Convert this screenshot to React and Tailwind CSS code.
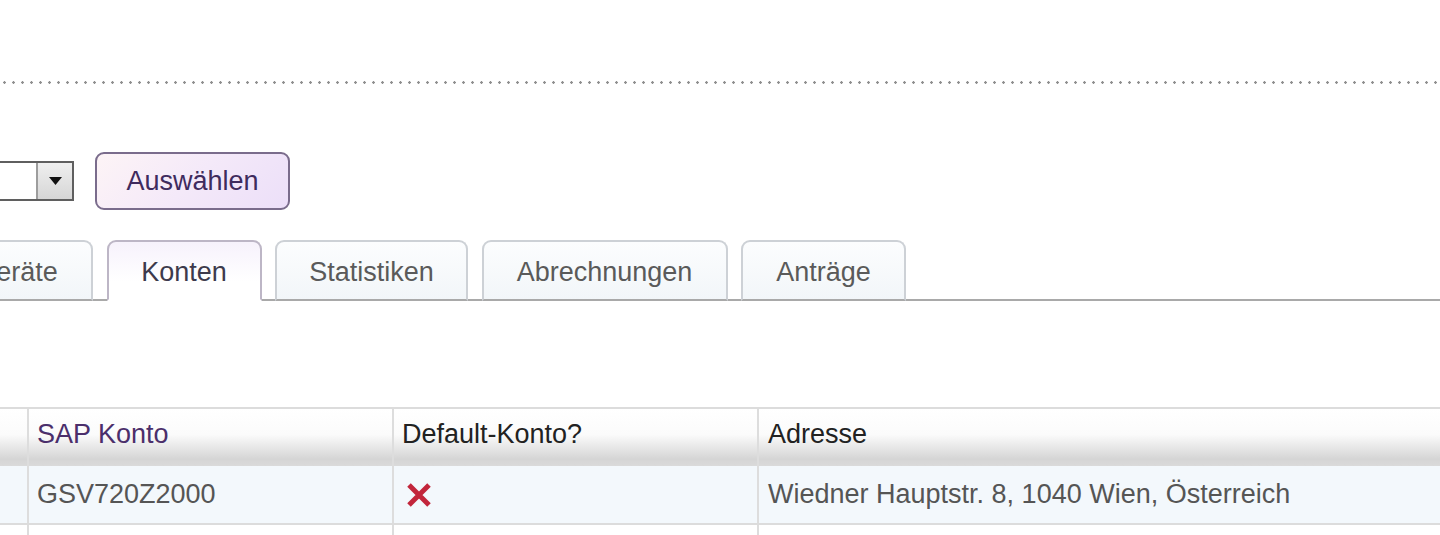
export default function App() {
  const tabBase =
    "h-[61px] mb-[-2px] border-2 rounded-t-[9px] flex items-center justify-center pt-[3px] shrink-0";
  const inactive =
    "border-[#cdd1d6] border-b-[#a9a9a9] bg-[linear-gradient(to_bottom,#fcfdfe,#f2f6f9)] text-[#5a5a5a]";
  return (
    <div className="w-[1440px] h-[535px] overflow-hidden bg-white font-['Liberation_Sans',Arial,sans-serif] text-[27px] leading-none">
      <div className="h-[81px]" />
      <div className="h-[3px] bg-[radial-gradient(circle,#8f8f8f_1.1px,transparent_1.5px)] bg-[length:9px_3px] bg-repeat-x" />

      <div className="mt-[68px] flex items-center h-[58px]">
        <div className="ml-[-126px] w-[200px] h-[40px] border-2 border-[#5f5f5f] bg-white flex justify-end shrink-0">
          <div className="w-[36px] h-full border-l-2 border-[#9d9d9d] bg-[linear-gradient(to_bottom,#efefef,#d6d6d6)] flex items-center justify-center">
            <svg width="13" height="8" viewBox="0 0 13 8">
              <path d="M0 0 L13 0 L6.5 8 Z" fill="#111" />
            </svg>
          </div>
        </div>
        <button className="ml-[21px] w-[195px] h-[58px] border-2 border-[#7a6c8c] rounded-[9px] bg-[linear-gradient(135deg,#fdf4f6_0%,#f4e9f9_50%,#ecdff9_100%)] text-[#3f2b5e] flex items-center justify-center shrink-0">
          Auswählen
        </button>
      </div>

      <div className="mt-[30px] flex gap-[13.5px] h-[61px] border-b-2 border-[#a9a9a9]">
        <div className={`${tabBase} ${inactive} ml-[-60px] w-[153px]`}>Geräte</div>
        <div
          className={`${tabBase} w-[155px] border-[#bdb6c6] border-b-white bg-[linear-gradient(to_bottom,#f7f2fc,#ffffff_70%)] text-[#3d3a4c]`}
        >
          Konten
        </div>
        <div className={`${tabBase} ${inactive} w-[193px]`}>Statistiken</div>
        <div className={`${tabBase} ${inactive} w-[246px]`}>Abrechnungen</div>
        <div className={`${tabBase} ${inactive} w-[165px]`}>Anträge</div>
      </div>

      <div className="mt-[106px]">
        <div className="grid grid-cols-[29px_365px_365px_1fr] h-[59px] border-t-2 border-[#dcdcdc] bg-[linear-gradient(to_bottom,#ffffff_0%,#fbfbfb_45%,#d5d5d5_88%,#dadada_100%)]">
          <div className="border-r-2 border-[#dddddd]" />
          <div className="border-r-2 border-[#dddddd] flex items-center pl-[8px] pb-[6px] text-[#4b2f6b]">
            SAP Konto
          </div>
          <div className="border-r-2 border-[#dddddd] flex items-center pl-[8px] pb-[6px] text-[#222222]">
            Default-Konto?
          </div>
          <div className="flex items-center pl-[9px] pb-[6px] text-[#222222]">Adresse</div>
        </div>
        <div className="grid grid-cols-[29px_365px_365px_1fr] h-[59px] border-b-2 border-[#dcdcdc] bg-[#f3f8fc]">
          <div className="border-r-2 border-[#dddddd]" />
          <div className="border-r-2 border-[#dddddd] flex items-center pl-[8px] text-[#555555]">
            GSV720Z2000
          </div>
          <div className="border-r-2 border-[#dddddd] flex items-center pl-[11px]">
            <svg width="28" height="26" viewBox="0 0 28 26">
              <path
                d="M4 3 L24 23 M24 3 L4 23"
                stroke="#c2263b"
                strokeWidth="5"
                strokeLinecap="butt"
              />
            </svg>
          </div>
          <div className="flex items-center pl-[9px] text-[#555555]">
            Wiedner Hauptstr. 8, 1040 Wien, Österreich
          </div>
        </div>
        <div className="grid grid-cols-[29px_365px_365px_1fr] h-[59px] bg-white">
          <div className="border-r-2 border-[#dddddd]" />
          <div className="border-r-2 border-[#dddddd]" />
          <div className="border-r-2 border-[#dddddd]" />
          <div />
        </div>
      </div>
    </div>
  );
}
